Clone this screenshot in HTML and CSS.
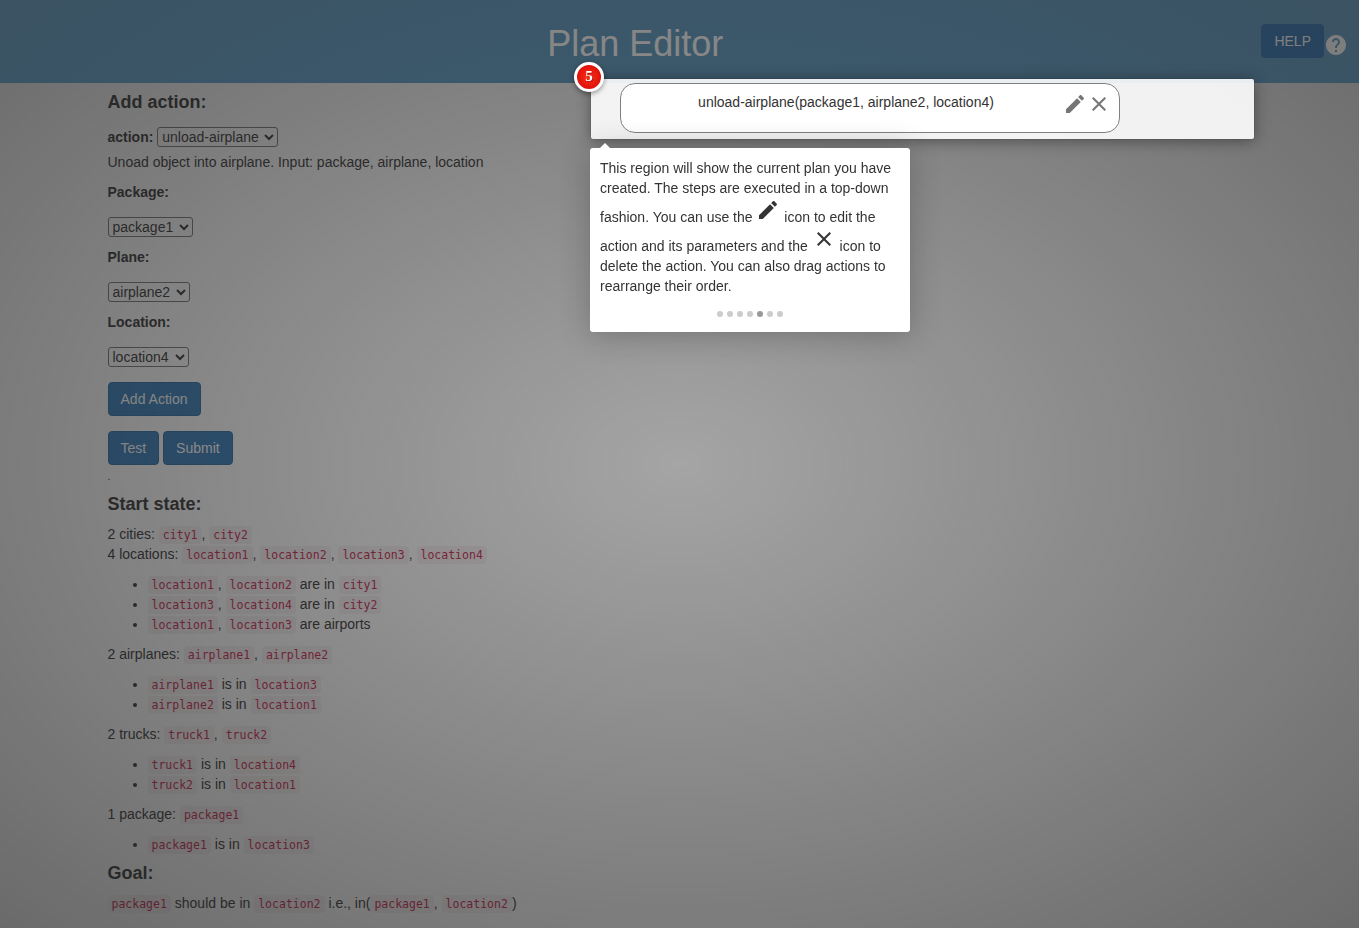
FILE: index.html
```html
<!DOCTYPE html>
<html lang="en">
<head>
    <meta charset="UTF-8">
    <meta name="viewport" content="width=device-width, initial-scale=1.0">
    <title>Plan Editor</title>
    <link rel="stylesheet" href="styles.css">
</head>
<body>

    <header class="top-bar">
        <h1 class="page-title">Plan Editor</h1>
        <button type="button" class="btn btn-help">HELP</button>
        <svg class="help-icon" viewBox="0 0 24 24"><path d="M12 2C6.48 2 2 6.48 2 12s4.48 10 10 10 10-4.48 10-10S17.52 2 12 2zm1 17h-2v-2h2v2zm2.07-7.75l-.9.92C13.45 12.9 13 13.5 13 15h-2v-.5c0-1.1.45-2.1 1.17-2.83l1.24-1.26c.37-.36.59-.86.59-1.41 0-1.1-.9-2-2-2s-2 .9-2 2H8c0-2.21 1.79-4 4-4s4 1.79 4 4c0 .88-.36 1.68-.93 2.25z"/></svg>
    </header>

    <main class="content">
        <h4 class="first-heading">Add action:</h4>

        <div class="action-row">
            <label for="action">action:</label>
            <select id="action"><option>unload-airplane</option></select>
        </div>
        <p class="action-desc">Unoad object into airplane. Input: package, airplane, location</p>

        <label class="field-label" for="package">Package:</label>
        <div class="field"><select id="package"><option>package1</option></select></div>

        <label class="field-label" for="plane">Plane:</label>
        <div class="field"><select id="plane"><option>airplane2</option></select></div>

        <label class="field-label" for="location">Location:</label>
        <div class="field"><select id="location"><option>location4</option></select></div>

        <div class="btn-row add-row"><button type="button" class="btn btn-add">Add Action</button></div>
        <div class="btn-row">
            <button type="button" class="btn">Test</button>
            <button type="button" class="btn">Submit</button>
        </div>
        <div class="dot-line">.</div>

        <h4 class="state-heading">Start state:</h4>
        <p>
            2 cities: <code>city1</code>, <code>city2</code><br>
            4 locations: <code>location1</code>, <code>location2</code>, <code>location3</code>, <code>location4</code>
        </p>
        <ul>
            <li><code>location1</code>, <code>location2</code> are in <code>city1</code></li>
            <li><code>location3</code>, <code>location4</code> are in <code>city2</code></li>
            <li><code>location1</code>, <code>location3</code> are airports</li>
        </ul>
        <p>2 airplanes: <code>airplane1</code>, <code>airplane2</code></p>
        <ul>
            <li><code>airplane1</code> is in <code>location3</code></li>
            <li><code>airplane2</code> is in <code>location1</code></li>
        </ul>
        <p>2 trucks: <code>truck1</code>, <code>truck2</code></p>
        <ul>
            <li><code>truck1</code> is in <code>location4</code></li>
            <li><code>truck2</code> is in <code>location1</code></li>
        </ul>
        <p>1 package: <code>package1</code></p>
        <ul>
            <li><code>package1</code> is in <code>location3</code></li>
        </ul>

        <h4>Goal:</h4>
        <p><code>package1</code> should be in <code>location2</code> i.e., in(<code>package1</code>, <code>location2</code>)</p>
    </main>

    <!-- guided tour on top of the page -->
    <div class="tour-overlay"></div>

    <div class="tour-highlight">
        <div class="plan-step">
            <span class="plan-step-text">unload-airplane(package1, airplane2, location4)</span>
            <svg class="icon plan-icon" viewBox="0 0 24 24"><path d="M3 17.25V21h3.75L17.81 9.94l-3.75-3.75L3 17.25zM20.71 7.04c.39-.39.39-1.02 0-1.41l-2.34-2.34c-.39-.39-1.02-.39-1.41 0l-1.83 1.83 3.75 3.75 1.83-1.83z"/></svg>
            <svg class="icon plan-icon" viewBox="0 0 24 24"><path d="M19 6.41L17.59 5 12 10.59 6.41 5 5 6.41 10.59 12 5 17.59 6.41 19 12 13.41 17.59 19 19 17.59 13.41 12z"/></svg>
        </div>
    </div>

    <div class="tour-number">5</div>

    <div class="tour-tooltip">
        <div class="tour-arrow"></div>
        <div class="tour-text">
            This region will show the current plan you have created. The steps are executed in a top-down fashion. You can use the
            <svg class="icon" viewBox="0 0 24 24"><path d="M3 17.25V21h3.75L17.81 9.94l-3.75-3.75L3 17.25zM20.71 7.04c.39-.39.39-1.02 0-1.41l-2.34-2.34c-.39-.39-1.02-.39-1.41 0l-1.83 1.83 3.75 3.75 1.83-1.83z"/></svg>
            icon to edit the action and its parameters and the
            <svg class="icon" viewBox="0 0 24 24"><path d="M19 6.41L17.59 5 12 10.59 6.41 5 5 6.41 10.59 12 5 17.59 6.41 19 12 13.41 17.59 19 19 17.59 13.41 12z"/></svg>
            icon to delete the action. You can also drag actions to rearrange their order.
        </div>
        <div class="tour-dots">
            <span class="tour-dot"></span>
            <span class="tour-dot"></span>
            <span class="tour-dot"></span>
            <span class="tour-dot"></span>
            <span class="tour-dot active"></span>
            <span class="tour-dot"></span>
            <span class="tour-dot"></span>
        </div>
    </div>

</body>
</html>
```

FILE: styles.css
```css
html, body {
    height: 100%;
}

body {
    font-family: "Liberation Sans", Arial, sans-serif;
    font-size: 14px;
    line-height: 20px;
    color: #333;
    background-color: #fff;
    margin: 0;
    overflow: hidden;
}

.top-bar {
    position: relative;
    z-index: 2;
    display: flex;
    align-items: flex-start;
    height: 83px;
    box-sizing: border-box;
    padding: 24px 11px 0 9px;
    background-color: #3f7ba3;
}

/* the bar is dimmed a little less than the page */
.top-bar::after {
    content: "";
    position: absolute;
    inset: 0;
    background: radial-gradient(ellipse 961px 656px at 680px 464px, rgba(56, 56, 56, 0.41) 0, rgba(56, 56, 56, 0.6) 100%);
}

.page-title {
    flex: 1;
    margin: 0;
    text-align: center;
    font-size: 36px;
    font-weight: 400;
    line-height: 39px;
    color: #e0e0e0;
}

.help-icon {
    width: 24px;
    height: 24px;
    margin-top: 9px;
    fill: #e0e0e0;
}

.btn {
    font-family: inherit;
    font-size: 14px;
    line-height: 20px;
    padding: 6px 12px;
    color: #fff;
    background-color: #337ab7;
    border: 1px solid #2e6da4;
    border-radius: 4px;
}

.btn-help {
    color: #e0e0e0;
    background-color: #0f5290;
    border-color: #0f5290;
}

.btn-add {
    width: 93px;
    padding: 6px 0;
}

.content {
    padding-left: 107.5px;
}

h4 {
    font-size: 18px;
    font-weight: bold;
    line-height: 19.8px;
    margin: 10px 0;
}

.first-heading {
    margin-top: 10px;
    margin-bottom: 14px;
}

.state-heading {
    margin-bottom: 9px;
}

p {
    margin: 0 0 10px;
}

label {
    font-weight: bold;
}

select {
    font-family: inherit;
    font-size: 14px;
    color: #333;
    height: 20px;
    padding-right: 2px;
    background-color: #fff;
    border: 1px solid #767676;
    border-radius: 3px;
}

.action-row {
    height: 20px;
    margin-bottom: 5px;
}

.action-desc {
    margin-bottom: 10px;
}

.field-label {
    display: block;
    margin-bottom: 5px;
}

.field {
    height: 20px;
    padding: 10px 0;
}

.btn-row {
    margin-bottom: 15px;
}

.add-row {
    margin-top: 5px;
}

.dot-line {
    font-size: 10px;
    height: 18px;
    margin-top: -13px;
}

ul {
    margin: 0 0 10px;
    padding-left: 40px;
}

code {
    font-family: "DejaVu Sans Mono", monospace;
    font-size: 11.5px;
    line-height: 1;
    padding: 2px 4px;
    color: #c7254e;
    background-color: #f9f2f4;
    border-radius: 4px;
}

/* tour */
.tour-overlay {
    position: fixed;
    inset: 0;
    background: radial-gradient(ellipse farthest-corner at center, rgba(36, 36, 36, 0.41) 0, rgba(36, 36, 36, 0.68) 100%);
}

.tour-highlight {
    position: absolute;
    z-index: 3;
    left: 591px;
    top: 79px;
    width: 663px;
    height: 60px;
    box-sizing: border-box;
    padding: 4px 0 0 29px;
    background-color: rgba(255, 255, 255, 0.9);
    border-radius: 2px;
    box-shadow: 0 0 1px rgba(33, 33, 33, 0.8), 0 2px 15px rgba(0, 0, 0, 0.4);
}

.plan-step {
    display: flex;
    align-items: flex-start;
    width: 500px;
    height: 50px;
    box-sizing: border-box;
    padding: 8px 8px 0 8px;
    background-color: #fff;
    border: 1px solid #808080;
    border-radius: 15px;
}

.plan-step-text {
    flex: 1;
    text-align: center;
}

.icon {
    width: 24px;
    height: 24px;
    fill: #333;
}

.plan-icon {
    fill: #757575;
}

.tour-number {
    position: absolute;
    z-index: 4;
    left: 574px;
    top: 62px;
    width: 24px;
    height: 24px;
    border: 3px solid #fff;
    border-radius: 50%;
    background: radial-gradient(circle, #ff3019 0, #cf0404 100%);
    box-shadow: 0 2px 5px rgba(0, 0, 0, 0.4);
    color: #fff;
    font-family: "Liberation Serif", serif;
    font-size: 15px;
    font-weight: bold;
    line-height: 23px;
    text-align: center;
    text-shadow: 1px 1px 1px rgba(0, 0, 0, 0.3);
}

.tour-tooltip {
    position: absolute;
    z-index: 3;
    left: 590px;
    top: 148px;
    width: 320px;
    height: 184px;
    box-sizing: border-box;
    padding: 10px;
    background-color: #fff;
    border-radius: 3px;
    box-shadow: 0 3px 30px rgba(33, 33, 33, 0.3);
}

.tour-arrow {
    position: absolute;
    left: 10px;
    top: -10px;
    border: 5px solid transparent;
    border-bottom-color: #fff;
}

.tour-dots {
    display: flex;
    justify-content: center;
    gap: 4px;
    margin-top: 15px;
}

.tour-dot {
    width: 6px;
    height: 6px;
    border-radius: 50%;
    background-color: #ccc;
}

.tour-dot.active {
    background-color: #999;
}
```
